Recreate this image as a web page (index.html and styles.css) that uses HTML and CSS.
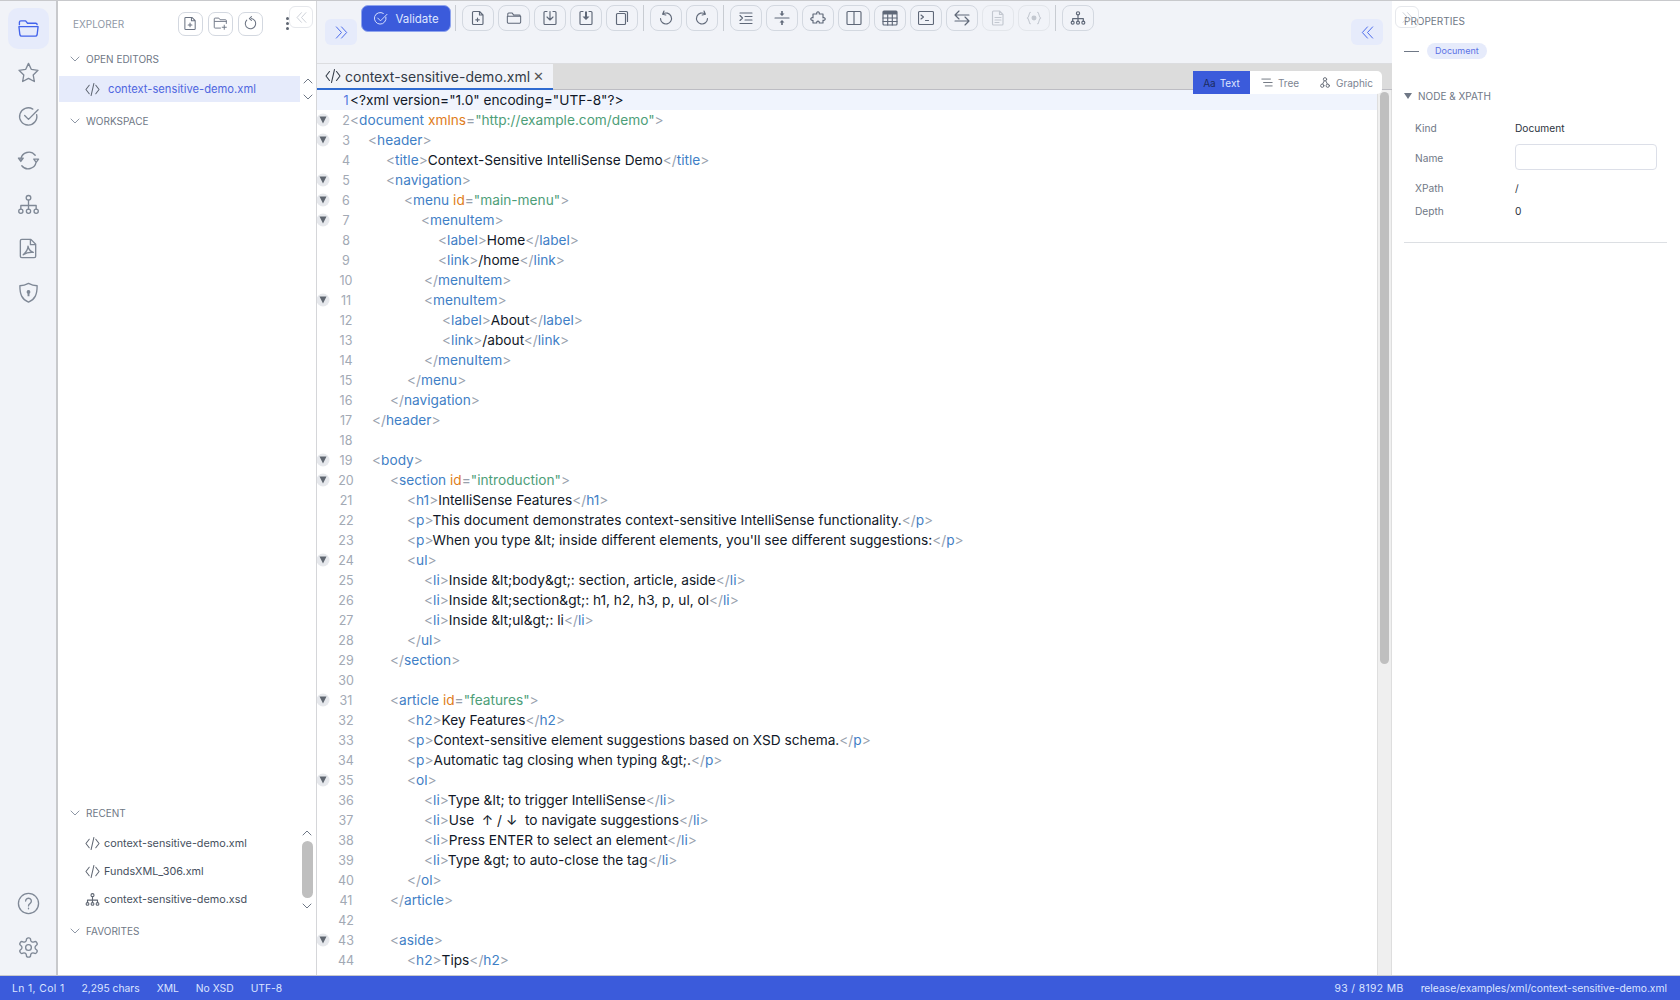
FILE: index.html
```html
<!DOCTYPE html>
<html>
<head>
  <title>XML Editor</title>
  <link rel="stylesheet" href="styles.css">
</head>
<body>
  <svg class="sprite" width="0" height="0">
    <symbol id="code" viewBox="0 0 16 16"><path d="M4.500 3.500 1 8l3.500 4.500M11.500 3.500 15 8l-3.500 4.500M9.500 1.500l-3 13"/></symbol>
    <symbol id="tree" viewBox="0 0 24 24"><circle cx="12" cy="5" r="2.400"/><circle cx="4" cy="19" r="2.200"/><circle cx="12" cy="19" r="2.200"/><circle cx="20" cy="19" r="2.200"/><path d="M12 7.500V17M4 17v-4h16v4"/></symbol>
    <symbol id="chev-down" viewBox="0 0 10 6"><path d="M1 1l4 4 4-4"/></symbol>
    <symbol id="chev-up" viewBox="0 0 10 6"><path d="M1 5l4-4 4 4"/></symbol>
    <symbol id="double-left" viewBox="0 0 16 16"><path d="M8 2 2.500 8 8 14M13.500 2 8 8l5.500 6"/></symbol>
    <symbol id="double-right" viewBox="0 0 16 16"><path d="M2.500 2 8 8l-5.500 6M8 2l5.500 6L8 14"/></symbol>
    <symbol id="fold" viewBox="0 0 14 14"><circle cx="7" cy="7" r="6.500" fill="#e6e8ec" stroke="none"/><path d="M3.500 3.500h7L7 10.500z" fill="#5f6670" stroke="none"/></symbol>
  </svg>

  <div class="app">
    <aside class="activity">
      <a class="activity-btn active"><svg viewBox="0 0 24 24"><path d="M2.500 8V5.500a1.500 1.500 0 0 1 1.500-1.500h5l2 2.500h8.500A1.500 1.500 0 0 1 21 8M2 10h20l-1 8.500a2 2 0 0 1-2 1.500H5a2 2 0 0 1-2-1.500z"/></svg></a>
      <a class="activity-btn"><svg viewBox="0 0 24 24"><path d="M12 2.500l3 6.300 6.900.9-5 4.800 1.200 6.900-6.100-3.300-6.100 3.300 1.200-6.900-5-4.800 6.900-.9z"/></svg></a>
      <a class="activity-btn"><svg viewBox="0 0 24 24"><path d="M20.500 10a9 9 0 1 1-4-5.700M8 11l4 4 10-10"/></svg></a>
      <a class="activity-btn"><svg viewBox="0 0 24 24"><path d="M4 10.500a8.500 8.500 0 0 1 15-4M20 13.500a8.500 8.500 0 0 1-15 4M1.500 9.500h5L4 13zM17.500 10.500h5L20 14z"/></svg></a>
      <a class="activity-btn"><svg><use href="#tree"/></svg></a>
      <a class="activity-btn"><svg viewBox="0 0 24 24"><path d="M5 2.500h9.500l5 5V20a1.500 1.500 0 0 1-1.500 1.500H5A1.500 1.500 0 0 1 3.500 20V4A1.500 1.500 0 0 1 5 2.500zM14 2.500V8h5.500M11.500 9.500c0 3-1.500 6-5 9M11.500 9.500c.5 3 2.500 5.500 5.500 6.500M6.500 18.500c3-2 6.500-3 10.500-2.500"/></svg></a>
      <a class="activity-btn"><svg viewBox="0 0 24 24"><path d="M12 2.500c3 1.700 5.500 2.500 9 2.500 0 9-2 14-9 17C5 19 3 14 3 5c3.500 0 6-.8 9-2.500z"/><path class="solid" d="M12 9.500a2 2 0 0 1 1 3.700V16h-2v-2.800a2 2 0 0 1 1-3.700z"/></svg></a>
      <div class="activity-spacer"></div>
      <a class="activity-btn"><svg viewBox="0 0 24 24"><circle cx="12" cy="12" r="10.500"/><path d="M9 9.500a3 3 0 1 1 4.500 2.600c-1 .6-1.500 1.200-1.500 2.400M12 17v.6"/></svg></a>
      <a class="activity-btn"><svg viewBox="0 0 24 24"><circle cx="12" cy="12" r="3"/><path d="M12.220 2h-.44a2 2 0 0 0-2 2v.18a2 2 0 0 1-1 1.730l-.43.25a2 2 0 0 1-2 0l-.15-.08a2 2 0 0 0-2.730.73l-.22.38a2 2 0 0 0 .73 2.730l.15.1a2 2 0 0 1 1 1.720v.51a2 2 0 0 1-1 1.740l-.15.09a2 2 0 0 0-.73 2.730l.22.38a2 2 0 0 0 2.730.73l.15-.08a2 2 0 0 1 2 0l.43.25a2 2 0 0 1 1 1.730V20a2 2 0 0 0 2 2h.44a2 2 0 0 0 2-2v-.18a2 2 0 0 1 1-1.730l.43-.25a2 2 0 0 1 2 0l.15.08a2 2 0 0 0 2.730-.73l.22-.39a2 2 0 0 0-.73-2.730l-.15-.08a2 2 0 0 1-1-1.740v-.5a2 2 0 0 1 1-1.740l.15-.09a2 2 0 0 0 .73-2.730l-.22-.38a2 2 0 0 0-2.730-.73l-.15.08a2 2 0 0 1-2 0l-.43-.25a2 2 0 0 1-1-1.730V4a2 2 0 0 0-2-2z"/></svg></a>
    </aside>

    <aside class="explorer">
      <div class="explorer-head">
        <span class="panel-title">EXPLORER</span>
        <div class="explorer-tools">
          <button class="mini-btn"><svg viewBox="0 0 16 16"><path d="M3 1.500h6.500l3.500 3.500v8.500a1 1 0 0 1-1 1H3a1 1 0 0 1-1-1v-11a1 1 0 0 1 1-1zM9 1.500V5h4M7.500 7.500v4M5.500 9.500h4"/></svg></button>
          <button class="mini-btn"><svg viewBox="0 0 18 16"><path d="M9 13.500H2.500a1 1 0 0 1-1-1v-10a1 1 0 0 1 1-1H7l1.500 2H15a1 1 0 0 1 1 1V8M2 5.500h14M13.500 10v5M11 12.500h5"/></svg></button>
          <button class="mini-btn"><svg viewBox="0 0 16 16"><path d="M9 2.700A5.500 5.500 0 1 1 4 4.300M9 .7 6.800 2.700 9 4.700"/></svg></button>
        </div>
        <span class="kebab"><i></i><i></i><i></i></span>
        <button class="panel-collapse left"><svg><use href="#double-left"/></svg></button>
      </div>

      <div class="section-title"><svg class="chev"><use href="#chev-down"/></svg>OPEN EDITORS</div>
      <div class="open-row">
        <div class="file-row selected"><svg class="file-icon"><use href="#code"/></svg>context-sensitive-demo.xml</div>
        <div class="row-arrows"><svg class="chev"><use href="#chev-up"/></svg><svg class="chev"><use href="#chev-down"/></svg></div>
      </div>
      <div class="section-title workspace"><svg class="chev"><use href="#chev-down"/></svg>WORKSPACE</div>

      <div class="explorer-spacer"></div>

      <div class="section-title"><svg class="chev"><use href="#chev-down"/></svg>RECENT</div>
      <div class="recent">
        <div class="recent-list">
          <div class="file-row"><svg class="file-icon"><use href="#code"/></svg>context-sensitive-demo.xml</div>
          <div class="file-row"><svg class="file-icon"><use href="#code"/></svg>FundsXML_306.xml</div>
          <div class="file-row"><svg class="file-icon tree-icon"><use href="#tree"/></svg>context-sensitive-demo.xsd</div>
        </div>
        <div class="recent-scroll">
          <svg class="chev"><use href="#chev-up"/></svg>
          <span class="recent-thumb"></span>
          <svg class="chev"><use href="#chev-down"/></svg>
        </div>
      </div>
      <div class="section-title favorites"><svg class="chev"><use href="#chev-down"/></svg>FAVORITES</div>
    </aside>

    <main class="main">
      <div class="toolbar">
        <button class="side-toggle"><svg><use href="#double-right"/></svg></button>
        <div class="actions">
          <button class="validate"><svg viewBox="0 0 16 16"><path d="M13.800 6.500a6.200 6.200 0 1 1-2.800-4M5 7.500l3 3 7-7"/></svg>Validate</button>
          <span class="sep"></span>
          <button class="tool"><svg viewBox="0 0 16 16"><path d="M3.500 1.500h6l3.500 3.500v8.500a1 1 0 0 1-1 1H3.500a1 1 0 0 1-1-1v-11a1 1 0 0 1 1-1zM9.500 1.500V5H13M7.500 8v3.500M5.800 9.800h3.500"/></svg></button>
          <button class="tool"><svg viewBox="0 0 18 16"><path d="M2 6V3.500a1 1 0 0 1 1-1h4l1.500 2h6.500a1 1 0 0 1 1 1V6M1.500 6h15v6.500a1.500 1.500 0 0 1-1.500 1.500H3a1.500 1.500 0 0 1-1.500-1.500z"/></svg></button>
          <button class="tool"><svg viewBox="0 0 16 16"><path d="M5 1.500H3a1 1 0 0 0-1 1v11a1 1 0 0 0 1 1h10a1 1 0 0 0 1-1v-11a1 1 0 0 0-1-1h-2M8 1.500v8M5 7l3 3 3-3"/></svg></button>
          <button class="tool"><svg viewBox="0 0 16 16"><path d="M5 1.500H3a1 1 0 0 0-1 1v11a1 1 0 0 0 1 1h10a1 1 0 0 0 1-1v-11a1 1 0 0 0-1-1h-2"/><path class="solid" d="M7 1.500h2v5h2.500L8 10 4.500 6.500H7z"/></svg></button>
          <button class="tool"><svg viewBox="0 0 16 16"><path d="M5.500 1.500h7a1 1 0 0 1 1 1v9M2.500 4.500a1 1 0 0 1 1-1h7a1 1 0 0 1 1 1v9a1 1 0 0 1-1 1h-7a1 1 0 0 1-1-1z"/></svg></button>
          <span class="sep"></span>
          <button class="tool"><svg viewBox="0 0 16 16"><path d="M4.800 4A5.500 5.500 0 1 1 2.500 8.500M6 1 4.600 4.200l3.200.8"/></svg></button>
          <button class="tool"><svg viewBox="0 0 16 16"><path d="M11.200 4a5.500 5.500 0 1 0 2.300 4.500M10 1l1.400 3.200-3.200.8"/></svg></button>
          <span class="sep"></span>
          <button class="tool"><svg viewBox="0 0 16 16"><path d="M2 3h12M7 6.500h7M7 10h7M2 13.500h12M2 5.500 4.500 8 2 10.500"/></svg></button>
          <button class="tool"><svg viewBox="0 0 16 16"><path d="M1 8h14"/><path class="solid" d="M8 6 5.500 3.500h1.700V1h1.600v2.500h1.700zM8 10l2.500 2.500H8.800V15H7.200v-2.500H5.500z"/></svg></button>
          <button class="tool"><svg viewBox="0 0 16 16"><path d="M3 4H6.800c-.8-3 3.200-3 2.400 0H13v3.800c3-.8 3 3.200 0 2.400V13H9.200c.8-2.600-3.200-2.600-2.400 0H3v-2.800c-3 .8-3-3.200 0-2.400z"/></svg></button>
          <button class="tool"><svg viewBox="0 0 16 16"><rect x="1" y="1.500" width="14" height="13" rx="1"/><path d="M8 1.500v13"/></svg></button>
          <button class="tool"><svg viewBox="0 0 16 16"><rect x="1" y="1" width="14" height="14" rx="1"/><path class="solid" d="M1 1h14v3.500H1z"/><path d="M1 8h14M1 11.500h14M5.700 4.500V15M10.300 4.500V15"/></svg></button>
          <button class="tool"><svg viewBox="0 0 16 16"><rect x=".5" y="1.500" width="15" height="13" rx="1"/><path d="M3 5l2.500 2L3 9M7.500 10.500h3"/></svg></button>
          <button class="tool"><svg viewBox="0 0 16 16"><path d="M5 1 1 5l4 4M1 5h14M11 7l4 4-4 4M15 11H1"/></svg></button>
          <button class="tool disabled"><svg viewBox="0 0 16 16"><path d="M3.500 1h6l3.500 3.500v9.500a1 1 0 0 1-1 1H3.500a1 1 0 0 1-1-1V2a1 1 0 0 1 1-1zM9.500 1v3.500H13M5 7.500h6M5 10h6M5 12.500h4"/></svg></button>
          <button class="tool disabled"><svg viewBox="0 0 18 16"><path d="M5 1.500C3 1.500 4 7 1.500 8 4 9 3 14.500 5 14.500M13 1.500C15 1.500 14 7 16.500 8 14 9 15 14.500 13 14.500"/><circle class="solid" cx="9" cy="8" r="2.800"/></svg></button>
          <span class="sep"></span>
          <button class="tool"><svg class="tree-icon"><use href="#tree"/></svg></button>
        </div>
        <button class="side-toggle right"><svg><use href="#double-left"/></svg></button>
      </div>

      <div class="tabs">
        <div class="tab"><svg class="tab-icon"><use href="#code"/></svg>context-sensitive-demo.xml<span class="tab-close">&#10005;</span></div>
      </div>

      <div class="editor">
        <div class="view-switch">
          <span class="view on"><b>Aa</b> Text</span>
          <span class="view view-tree"><svg viewBox="0 0 14 10"><path d="M1 1h10M3 5h10M5 9h8"/></svg>Tree</span>
          <span class="view view-graphic"><svg viewBox="0 0 12 12"><circle cx="6" cy="2.500" r="1.800"/><circle cx="3" cy="9.500" r="1.800"/><circle cx="9" cy="9.500" r="1.800"/><path d="M5 4.500 3.500 7.500M7 4.500l1.500 3"/></svg>Graphic</span>
        </div>

        <div class="code">
          <div class="line current"><i class="gut"></i><span class="num">1</span><span class="src">&lt;?xml version="1.0" encoding="UTF-8"?&gt;</span></div>
          <div class="line"><svg class="gut"><use href="#fold"/></svg><span class="num">2</span><span class="src"><u>&lt;</u><em>document</em> <s>xmlns</s><u>=</u><q>"http://example.com/demo"</q><u>&gt;</u></span></div>
          <div class="line"><svg class="gut"><use href="#fold"/></svg><span class="num">3</span><span class="src i18"><u>&lt;</u><em>header</em><u>&gt;</u></span></div>
          <div class="line"><i class="gut"></i><span class="num">4</span><span class="src i36"><u>&lt;</u><em>title</em><u>&gt;</u>Context-Sensitive IntelliSense Demo<u>&lt;/</u><em>title</em><u>&gt;</u></span></div>
          <div class="line"><svg class="gut"><use href="#fold"/></svg><span class="num">5</span><span class="src i36"><u>&lt;</u><em>navigation</em><u>&gt;</u></span></div>
          <div class="line"><svg class="gut"><use href="#fold"/></svg><span class="num">6</span><span class="src i54"><u>&lt;</u><em>menu</em> <s>id</s><u>=</u><q>"main-menu"</q><u>&gt;</u></span></div>
          <div class="line"><svg class="gut"><use href="#fold"/></svg><span class="num">7</span><span class="src i71"><u>&lt;</u><em>menuItem</em><u>&gt;</u></span></div>
          <div class="line"><i class="gut"></i><span class="num">8</span><span class="src i88"><u>&lt;</u><em>label</em><u>&gt;</u>Home<u>&lt;/</u><em>label</em><u>&gt;</u></span></div>
          <div class="line"><i class="gut"></i><span class="num">9</span><span class="src i88"><u>&lt;</u><em>link</em><u>&gt;</u>/home<u>&lt;/</u><em>link</em><u>&gt;</u></span></div>
          <div class="line"><i class="gut"></i><span class="num">10</span><span class="src i74"><u>&lt;/</u><em>menuItem</em><u>&gt;</u></span></div>
          <div class="line"><svg class="gut"><use href="#fold"/></svg><span class="num">11</span><span class="src i74"><u>&lt;</u><em>menuItem</em><u>&gt;</u></span></div>
          <div class="line"><i class="gut"></i><span class="num">12</span><span class="src i92"><u>&lt;</u><em>label</em><u>&gt;</u>About<u>&lt;/</u><em>label</em><u>&gt;</u></span></div>
          <div class="line"><i class="gut"></i><span class="num">13</span><span class="src i92"><u>&lt;</u><em>link</em><u>&gt;</u>/about<u>&lt;/</u><em>link</em><u>&gt;</u></span></div>
          <div class="line"><i class="gut"></i><span class="num">14</span><span class="src i74"><u>&lt;/</u><em>menuItem</em><u>&gt;</u></span></div>
          <div class="line"><i class="gut"></i><span class="num">15</span><span class="src i57"><u>&lt;/</u><em>menu</em><u>&gt;</u></span></div>
          <div class="line"><i class="gut"></i><span class="num">16</span><span class="src i40"><u>&lt;/</u><em>navigation</em><u>&gt;</u></span></div>
          <div class="line"><i class="gut"></i><span class="num">17</span><span class="src i22"><u>&lt;/</u><em>header</em><u>&gt;</u></span></div>
          <div class="line"><i class="gut"></i><span class="num">18</span></div>
          <div class="line"><svg class="gut"><use href="#fold"/></svg><span class="num">19</span><span class="src i22"><u>&lt;</u><em>body</em><u>&gt;</u></span></div>
          <div class="line"><svg class="gut"><use href="#fold"/></svg><span class="num">20</span><span class="src i40"><u>&lt;</u><em>section</em> <s>id</s><u>=</u><q>"introduction"</q><u>&gt;</u></span></div>
          <div class="line"><i class="gut"></i><span class="num">21</span><span class="src i57"><u>&lt;</u><em>h1</em><u>&gt;</u>IntelliSense Features<u>&lt;/</u><em>h1</em><u>&gt;</u></span></div>
          <div class="line"><i class="gut"></i><span class="num">22</span><span class="src i57"><u>&lt;</u><em>p</em><u>&gt;</u>This document demonstrates context-sensitive IntelliSense functionality.<u>&lt;/</u><em>p</em><u>&gt;</u></span></div>
          <div class="line"><i class="gut"></i><span class="num">23</span><span class="src i57"><u>&lt;</u><em>p</em><u>&gt;</u>When you type &amp;lt; inside different elements, you'll see different suggestions:<u>&lt;/</u><em>p</em><u>&gt;</u></span></div>
          <div class="line"><svg class="gut"><use href="#fold"/></svg><span class="num">24</span><span class="src i57"><u>&lt;</u><em>ul</em><u>&gt;</u></span></div>
          <div class="line"><i class="gut"></i><span class="num">25</span><span class="src i74"><u>&lt;</u><em>li</em><u>&gt;</u>Inside &amp;lt;body&amp;gt;: section, article, aside<u>&lt;/</u><em>li</em><u>&gt;</u></span></div>
          <div class="line"><i class="gut"></i><span class="num">26</span><span class="src i74"><u>&lt;</u><em>li</em><u>&gt;</u>Inside &amp;lt;section&amp;gt;: h1, h2, h3, p, ul, ol<u>&lt;/</u><em>li</em><u>&gt;</u></span></div>
          <div class="line"><i class="gut"></i><span class="num">27</span><span class="src i74"><u>&lt;</u><em>li</em><u>&gt;</u>Inside &amp;lt;ul&amp;gt;: li<u>&lt;/</u><em>li</em><u>&gt;</u></span></div>
          <div class="line"><i class="gut"></i><span class="num">28</span><span class="src i57"><u>&lt;/</u><em>ul</em><u>&gt;</u></span></div>
          <div class="line"><i class="gut"></i><span class="num">29</span><span class="src i40"><u>&lt;/</u><em>section</em><u>&gt;</u></span></div>
          <div class="line"><i class="gut"></i><span class="num">30</span></div>
          <div class="line"><svg class="gut"><use href="#fold"/></svg><span class="num">31</span><span class="src i40"><u>&lt;</u><em>article</em> <s>id</s><u>=</u><q>"features"</q><u>&gt;</u></span></div>
          <div class="line"><i class="gut"></i><span class="num">32</span><span class="src i57"><u>&lt;</u><em>h2</em><u>&gt;</u>Key Features<u>&lt;/</u><em>h2</em><u>&gt;</u></span></div>
          <div class="line"><i class="gut"></i><span class="num">33</span><span class="src i57"><u>&lt;</u><em>p</em><u>&gt;</u>Context-sensitive element suggestions based on XSD schema.<u>&lt;/</u><em>p</em><u>&gt;</u></span></div>
          <div class="line"><i class="gut"></i><span class="num">34</span><span class="src i57"><u>&lt;</u><em>p</em><u>&gt;</u>Automatic tag closing when typing &amp;gt;.<u>&lt;/</u><em>p</em><u>&gt;</u></span></div>
          <div class="line"><svg class="gut"><use href="#fold"/></svg><span class="num">35</span><span class="src i57"><u>&lt;</u><em>ol</em><u>&gt;</u></span></div>
          <div class="line"><i class="gut"></i><span class="num">36</span><span class="src i74"><u>&lt;</u><em>li</em><u>&gt;</u>Type &amp;lt; to trigger IntelliSense<u>&lt;/</u><em>li</em><u>&gt;</u></span></div>
          <div class="line"><i class="gut"></i><span class="num">37</span><span class="src i74"><u>&lt;</u><em>li</em><u>&gt;</u>Use &nbsp;&#8593; / &#8595; &nbsp;to navigate suggestions<u>&lt;/</u><em>li</em><u>&gt;</u></span></div>
          <div class="line"><i class="gut"></i><span class="num">38</span><span class="src i74"><u>&lt;</u><em>li</em><u>&gt;</u>Press ENTER to select an element<u>&lt;/</u><em>li</em><u>&gt;</u></span></div>
          <div class="line"><i class="gut"></i><span class="num">39</span><span class="src i74"><u>&lt;</u><em>li</em><u>&gt;</u>Type &amp;gt; to auto-close the tag<u>&lt;/</u><em>li</em><u>&gt;</u></span></div>
          <div class="line"><i class="gut"></i><span class="num">40</span><span class="src i57"><u>&lt;/</u><em>ol</em><u>&gt;</u></span></div>
          <div class="line"><i class="gut"></i><span class="num">41</span><span class="src i40"><u>&lt;/</u><em>article</em><u>&gt;</u></span></div>
          <div class="line"><i class="gut"></i><span class="num">42</span></div>
          <div class="line"><svg class="gut"><use href="#fold"/></svg><span class="num">43</span><span class="src i40"><u>&lt;</u><em>aside</em><u>&gt;</u></span></div>
          <div class="line"><i class="gut"></i><span class="num">44</span><span class="src i57"><u>&lt;</u><em>h2</em><u>&gt;</u>Tips<u>&lt;/</u><em>h2</em><u>&gt;</u></span></div>
        </div>

        <div class="scrollbar"><span class="thumb"></span></div>
      </div>
    </main>

    <aside class="props">
      <div class="panel-title props-title">PROPERTIES</div>
      <button class="panel-collapse right"><svg><use href="#double-right"/></svg></button>
      <div class="node-row"><span class="dash"></span><span class="pill">Document</span></div>
      <div class="node-head"><span class="tri"></span>NODE &amp; XPATH</div>
      <div class="prop-grid">
        <span class="prop-key">Kind</span><span class="prop-val">Document</span>
        <span class="prop-key">Name</span><input class="prop-input" type="text">
        <span class="prop-key">XPath</span><span class="prop-val">/</span>
        <span class="prop-key">Depth</span><span class="prop-val">0</span>
      </div>
      <div class="props-rule"></div>
    </aside>
  </div>

  <footer class="status">
    <span class="spaced">Ln 1, Col 1</span>
    <span>2,295 chars</span>
    <span>XML</span>
    <span>No XSD</span>
    <span>UTF-8</span>
    <span class="status-gap"></span>
    <span class="spaced">93 / 8192 MB</span>
    <span>release/examples/xml/context-sensitive-demo.xml</span>
  </footer>
</body>
</html>
```

FILE: styles.css
```css
* {
  box-sizing: border-box;
}

html, body {
  height: 100%;
}

body {
  margin: 0;
  display: flex;
  flex-direction: column;
  font-family: Inter, "Noto Sans", sans-serif;
  background-color: #FFFFFF;
  color: #1f2937;
  overflow: hidden;
}

.sprite {
  position: absolute;
}

svg {
  fill: none;
  stroke: currentColor;
  stroke-linecap: round;
  stroke-linejoin: round;
}

svg .solid {
  fill: currentColor;
  stroke: none;
}

button {
  font-family: inherit;
  padding: 0;
  cursor: pointer;
}

.app {
  flex: 1;
  display: flex;
  min-height: 0;
  border-top: 1px solid #c8c9cc;
  border-bottom: 1px solid #c8c9cc;
}

/* activity bar */
.activity {
  width: 56px;
  flex-shrink: 0;
  display: flex;
  flex-direction: column;
  align-items: center;
  gap: 3px;
  padding: 7px 0 7px;
  background-color: #F1F3F8;
}

.activity-btn {
  width: 41px;
  height: 41px;
  display: flex;
  align-items: center;
  justify-content: center;
  border-radius: 10px;
  color: #7f8896;
}

.activity-btn svg {
  width: 23px;
  height: 23px;
  stroke-width: 1.4;
}

.activity-btn.active {
  background-color: #E6EBFB;
  color: #4263EB;
}

.activity-spacer {
  flex: 1;
}

/* explorer */
.explorer {
  width: 261px;
  flex-shrink: 0;
  display: flex;
  flex-direction: column;
  border-left: 2px solid #c8c9cc;
  border-right: 1px solid #d5d6d9;
  background-color: #FFFFFF;
}

.explorer-head {
  position: relative;
  height: 45px;
  display: flex;
  align-items: center;
  padding-left: 15px;
}

.panel-title {
  font-size: 10px;
  color: #8f98a6;
}

.explorer-head .panel-title {
  width: 105px;
  flex-shrink: 0;
}

.explorer-tools {
  display: flex;
  gap: 5px;
}

.mini-btn {
  width: 25px;
  height: 24px;
  display: flex;
  align-items: center;
  justify-content: center;
  border: 1px solid #d3d8e0;
  border-radius: 7px;
  background-color: #FFFFFF;
  color: #6b7382;
}

.mini-btn svg {
  width: 15px;
  height: 15px;
  stroke-width: 1.1;
}

.kebab {
  display: flex;
  flex-direction: column;
  gap: 2px;
  margin-left: 23px;
}

.kebab i {
  width: 3px;
  height: 3px;
  border-radius: 50%;
  background-color: #5f6672;
}

.panel-collapse {
  position: absolute;
  top: 5px;
  width: 24px;
  height: 22px;
  display: flex;
  align-items: center;
  justify-content: center;
  border: 1px solid #e6e8ec;
  border-radius: 6px;
  background-color: rgba(255, 255, 255, 0.7);
  color: #c3c8d0;
}

.panel-collapse.left {
  left: 231px;
}

.panel-collapse.right {
  left: 3px;
  background-color: transparent;
}

.panel-collapse svg {
  width: 13px;
  height: 13px;
}

.section-title {
  height: 26px;
  display: flex;
  align-items: center;
  padding-left: 12px;
  font-size: 10px;
  color: #6f7886;
}

.chev {
  width: 10px;
  height: 6px;
  margin-right: 6px;
  color: #8f98a6;
}

.open-row {
  display: flex;
  align-items: center;
  height: 26px;
  margin-top: 4px;
}

.file-row {
  display: flex;
  align-items: center;
  font-size: 10.8px;
  color: #46505e;
}

.file-icon {
  width: 15px;
  height: 15px;
  margin-right: 4px;
  color: #5f6672;
  stroke-width: 1.1;
}

.file-icon.tree-icon,
.tool .tree-icon {
  stroke-width: 1.8;
}

.selected {
  width: 241px;
  height: 26px;
  margin-left: 1px;
  padding-left: 26px;
  background-color: #E6EBFB;
  color: #4f66e0;
  font-size: 11.2px;
}

.selected .file-icon {
  margin-right: 8px;
}

.row-arrows {
  display: flex;
  flex-direction: column;
  gap: 10px;
  margin-left: 3px;
}

.row-arrows .chev,
.recent-scroll .chev {
  margin: 0;
  color: #6f7886;
}

.workspace {
  margin-top: 6px;
}

.explorer-spacer {
  flex: 1;
}

.recent {
  display: flex;
  height: 87px;
}

.recent-list {
  flex: 1;
  padding: 3px 0 0 27px;
}

.recent-list .file-row {
  height: 28px;
}

.recent-scroll {
  width: 12px;
  margin-right: 3px;
  padding-top: 4px;
  display: flex;
  flex-direction: column;
  align-items: center;
  gap: 5px;
}

.recent-thumb {
  width: 11px;
  height: 57px;
  flex-shrink: 0;
  border-radius: 6px;
  background-color: #bfbfbf;
}

.favorites {
  margin-top: 5px;
  margin-bottom: 31px;
}

/* toolbar */
.main {
  flex: 1;
  min-width: 0;
  display: flex;
  flex-direction: column;
}

.toolbar {
  height: 63px;
  flex-shrink: 0;
  display: flex;
  align-items: center;
  padding: 0 9px 0 8px;
  background-color: #F1F3F8;
  border-bottom: 1px solid #dcdde0;
}

.side-toggle {
  width: 32px;
  height: 26px;
  display: flex;
  align-items: center;
  justify-content: center;
  border: none;
  border-radius: 6px;
  background-color: #E6EBFB;
  color: #4263EB;
}

.side-toggle svg {
  width: 15px;
  height: 15px;
}

.side-toggle.right {
  margin-left: auto;
}

.actions {
  align-self: flex-start;
  display: flex;
  align-items: flex-start;
  gap: 4px;
  margin: 4px 0 0 4px;
}

.validate {
  width: 90px;
  height: 27px;
  margin-right: -1px;
  display: flex;
  align-items: center;
  justify-content: center;
  gap: 7px;
  border: 1px solid #8fa4ee;
  border-radius: 7px;
  background-color: #3B5BDB;
  color: #dfe6ff;
  font-size: 11.5px;
}

.validate svg {
  width: 15px;
  height: 15px;
}

.sep {
  width: 1px;
  height: 26px;
  margin: 0 2px 0 1px;
  background-color: #c8ccd2;
}

.tool {
  width: 32px;
  height: 26px;
  display: flex;
  align-items: center;
  justify-content: center;
  border: 1px solid #d3d8e0;
  border-radius: 8px;
  background-color: #F1F3F8;
  color: #5f6878;
}

.tool svg {
  width: 16px;
  height: 16px;
  stroke-width: 1.15;
}

.tool.disabled {
  border-color: #e3e6eb;
  color: #c3c8d0;
}

/* tabs */
.tabs {
  height: 26px;
  flex-shrink: 0;
  display: flex;
  background-color: #DCDCDC;
  border-bottom: 1px solid #bdbdc3;
}

.tab {
  height: 26px;
  display: flex;
  align-items: center;
  padding: 0 9px 0 8px;
  background-color: #F1F3F8;
  border-bottom: 2px solid #2f6bd0;
  font-size: 14px;
  color: #333b47;
}

.tab-icon {
  width: 16px;
  height: 16px;
  margin-right: 4px;
  stroke-width: 1.1;
}

.tab-close {
  margin-left: 3px;
  font-size: 13px;
  color: #555;
}

/* editor */
.editor {
  position: relative;
  flex: 1;
  min-height: 0;
  display: flex;
  background-color: #FFFFFF;
}

.view-switch {
  position: absolute;
  top: -19px;
  right: 10px;
  z-index: 2;
  width: 189px;
  height: 23px;
  display: flex;
  align-items: center;
  border-radius: 0 5px 5px 0;
  background-color: #FFFFFF;
  font-size: 10px;
  color: #7c8492;
}

.view {
  height: 23px;
  display: flex;
  align-items: center;
  justify-content: center;
  gap: 5px;
  white-space: nowrap;
}

.view-tree {
  width: 60px;
}

.view-graphic {
  width: 72px;
}

.view svg {
  width: 12px;
  height: 11px;
  color: #5f6672;
}

.view.on {
  width: 57px;
  background-color: #3B5BDB;
  color: #dfe6ff;
  gap: 4px;
}

.view b {
  font-weight: 400;
  color: #1c2b5e;
}

.code {
  flex: 1;
  min-width: 0;
  overflow: hidden;
  font-size: 13.7px;
  color: #111827;
}

.line {
  height: 20px;
  display: flex;
  align-items: center;
  white-space: pre;
}

.line.current {
  background-color: #F0F4FD;
}

.gut {
  width: 14px;
  height: 14px;
  flex-shrink: 0;
  margin: 0 6px 0 -1px;
  font-style: normal;
}

.num {
  width: 20px;
  flex-shrink: 0;
  text-align: center;
  font-size: 12.5px;
  color: #a2a9b4;
}

.current .num {
  color: #4f74dd;
}

.src {
  margin-left: -6px;
}

.src u {
  text-decoration: none;
  color: #98a1ad;
}

.src em {
  font-style: normal;
  color: #3f80c6;
}

.src s {
  text-decoration: none;
  color: #e07d20;
}

.src q {
  quotes: none;
  color: #4d9e78;
}

.i18 { padding-left: 18px; }
.i22 { padding-left: 22px; }
.i36 { padding-left: 36px; }
.i40 { padding-left: 40px; }
.i54 { padding-left: 54px; }
.i57 { padding-left: 57px; }
.i71 { padding-left: 71px; }
.i74 { padding-left: 74px; }
.i88 { padding-left: 88px; }
.i92 { padding-left: 92px; }

.scrollbar {
  width: 15px;
  flex-shrink: 0;
  padding: 2px 2px 0 2px;
  background-color: #EFEFEF;
  border-left: 1px solid #dedede;
  border-right: 1px solid #dedede;
}

.thumb {
  display: block;
  height: 572px;
  border-radius: 6px;
  background-color: #BFBFBF;
}

/* properties */
.props {
  position: relative;
  width: 288px;
  flex-shrink: 0;
  padding: 14px 13px 0 12px;
  background-color: #FFFFFF;
}

.props-title {
  color: #6f7886;
}

.node-row {
  display: flex;
  align-items: center;
  margin-top: 16px;
}

.dash {
  width: 15px;
  height: 1px;
  margin-right: 8px;
  background-color: #6f7886;
}

.pill {
  padding: 2px 8px;
  border-radius: 9px;
  background-color: #E6EBFB;
  color: #5b72e6;
  font-size: 9px;
  line-height: 12px;
}

.node-head {
  display: flex;
  align-items: center;
  margin-top: 31px;
  font-size: 10px;
  color: #6f7886;
}

.tri {
  width: 0;
  height: 0;
  margin-right: 6px;
  border-left: 4px solid transparent;
  border-right: 4px solid transparent;
  border-top: 6px solid #6f7886;
}

.prop-grid {
  display: grid;
  grid-template-columns: 100px 142px;
  align-items: center;
  row-gap: 11px;
  margin: 20px 0 0 11px;
  font-size: 10.2px;
}

.prop-key {
  color: #6f7886;
}

.prop-val {
  color: #2b3340;
}

.prop-input {
  height: 26px;
  margin: -1px 0 1px;
  border: 1px solid #dcdfe8;
  border-radius: 4px;
  background-color: #FFFFFF;
}

.props-rule {
  height: 1px;
  margin-top: 25px;
  background-color: #dcdfe3;
}

/* status bar */
.status {
  height: 24px;
  flex-shrink: 0;
  display: flex;
  align-items: center;
  gap: 17px;
  padding: 0 13px 0 12px;
  background-color: #3B5BDB;
  color: #dbe4ff;
  font-size: 10.3px;
}

.spaced {
  letter-spacing: 0.4px;
}

.status-gap {
  flex: 1;
}
```
